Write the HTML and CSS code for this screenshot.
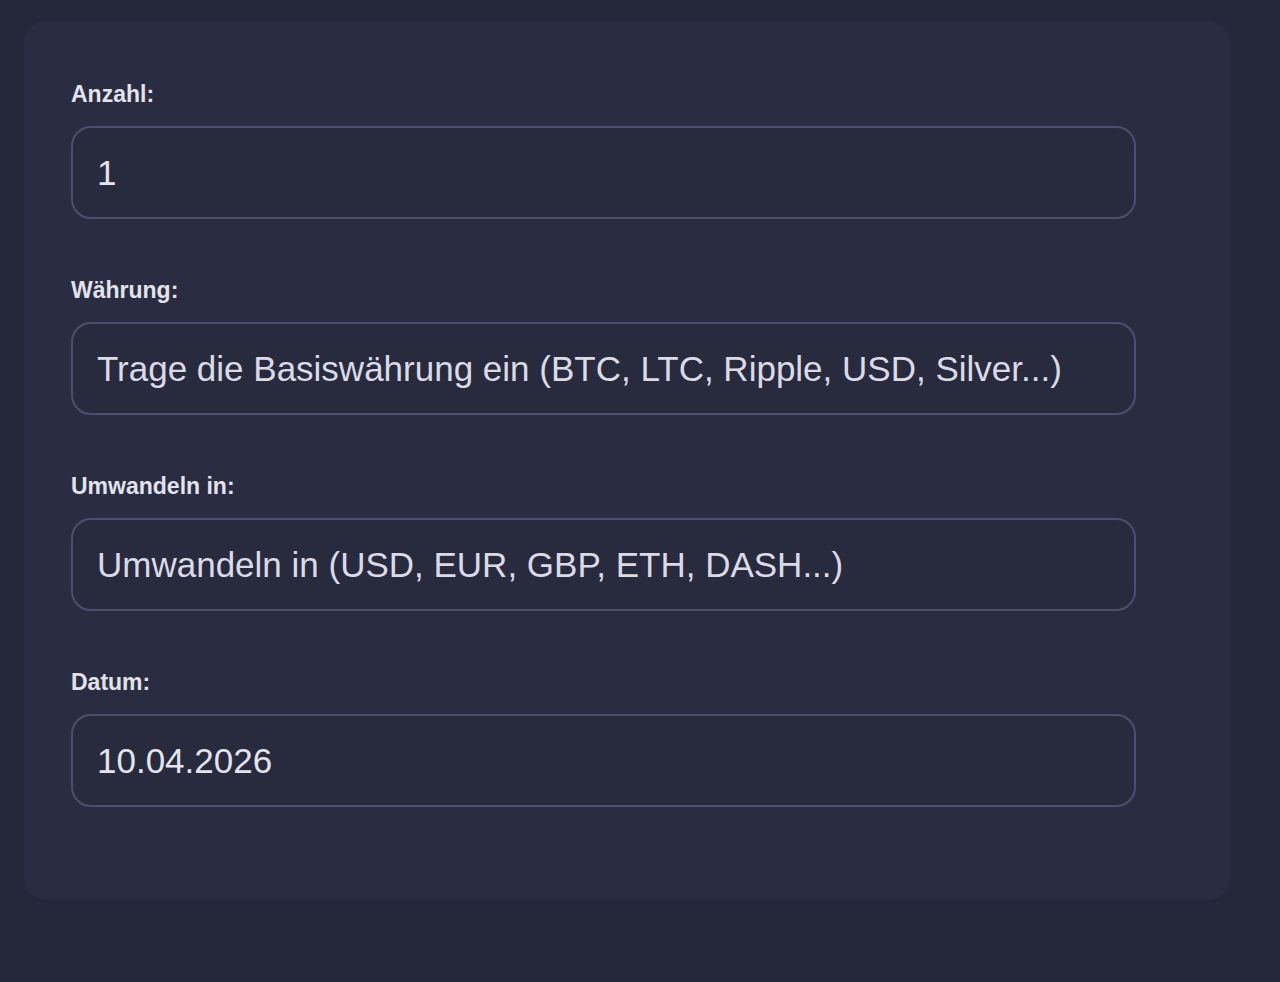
FILE: index.html
```html
<!DOCTYPE html>
<html lang="de">
<head>
<meta charset="utf-8">
<title>Umrechner</title>
<link rel="stylesheet" href="styles.css">
</head>
<body>
<div class="card">
  <div class="field">
    <label class="label" for="amount">Anzahl:</label>
    <input class="input" id="amount" type="text" value="1">
  </div>
  <div class="field">
    <label class="label" for="from">Währung:</label>
    <input class="input" id="from" type="text" placeholder="Trage die Basiswährung ein (BTC, LTC, Ripple, USD, Silver...)">
  </div>
  <div class="field">
    <label class="label" for="to">Umwandeln in:</label>
    <input class="input" id="to" type="text" placeholder="Umwandeln in (USD, EUR, GBP, ETH, DASH...)">
  </div>
  <div class="field">
    <label class="label" for="date">Datum:</label>
    <input class="input" id="date" type="text" value="10.04.2026">
  </div>
</div>
</body>
</html>
```

FILE: styles.css
```css
html, body {
  margin: 0;
  padding: 0;
  background: #25273a;
  height: 100%;
}
body {
  padding: 21px 50px 0 24px;
  box-sizing: border-box;
  font-family: "Liberation Sans", Arial, sans-serif;
}
.card {
  background: #2a2d42;
  border-radius: 22px;
  padding: 59px 47px 36px 47px;
  height: 879px;
  box-sizing: border-box;
}
.field {
  display: flex;
  flex-direction: column;
  align-items: flex-start;
  margin-bottom: 57px;
}
.label {
  font-family: "Liberation Sans", Arial, sans-serif;
  font-weight: 700;
  font-size: 23px;
  line-height: 29px;
  color: #e2e3ec;
  margin-bottom: 17px;
}
.input {
  width: 1065px;
  height: 93px;
  box-sizing: border-box;
  border: 2px solid #4c4f6e;
  border-radius: 20px;
  background: #282a3e;
  color: #e3e4ee;
  font-family: "Liberation Sans", Arial, sans-serif;
  font-size: 35px;
  padding: 0 24px;
  outline: none;
}
.input::placeholder {
  color: #dadbe6;
  opacity: 1;
}
```
